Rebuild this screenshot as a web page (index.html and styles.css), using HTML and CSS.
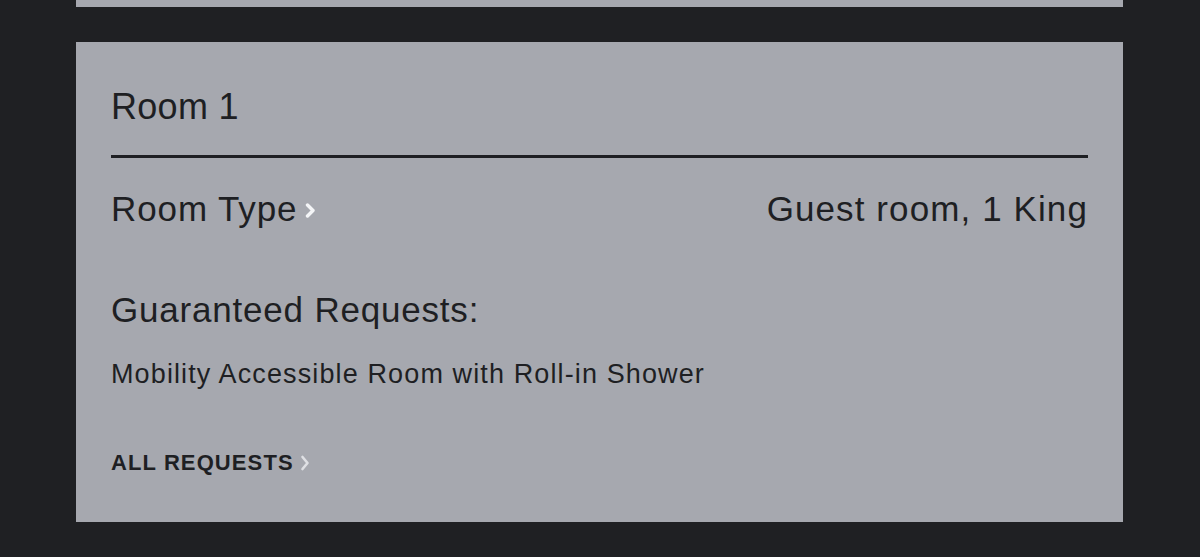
FILE: index.html
```html
<!DOCTYPE html>
<html>
<head>
	<meta charset="utf-8">
	<meta name="viewport" content="width=device-width, initial-scale=1">
	<title>Reservation</title>

	<link rel="stylesheet" href="styles.css">
</head>
<body>

	<div class="card card-prev"></div>

	<section class="card room">
		<h2 class="room-title">Room 1</h2>
		<div class="divider"></div>

		<div class="row">
			<a class="row-label" href="#">Room Type<svg class="chevron" viewBox="0 0 11 15" width="11" height="15"><polyline points="2.5,2 8,7.5 2.5,13" /></svg></a>
			<div class="row-value">Guest room, 1 King</div>
		</div>

		<h3 class="requests-title">Guaranteed Requests:</h3>
		<p class="request">Mobility Accessible Room with Roll-in Shower</p>

		<a class="all-requests" href="#">ALL REQUESTS<svg class="chevron small" viewBox="0 0 10 16" width="10" height="16"><polyline points="2.5,2 7.5,8 2.5,14" /></svg></a>
	</section>

</body>
</html>
```

FILE: styles.css
```css
* {
	margin: 0;
	padding: 0;
	box-sizing: border-box;
}

body {
	background-color: #1f2023;
	font-family: "Liberation Sans", Arial, sans-serif;
	color: #1e1f23;
}

.card {
	width: 1047px;
	margin-left: 76px;
	background-color: #a6a8af;
}

.card-prev {
	height: 7px;
}

.room {
	margin-top: 35px;
	height: 480px;
	padding: 44px 35px 0;
}

.room-title {
	font-size: 36px;
	font-weight: normal;
	line-height: 42px;
	letter-spacing: .3px;
}

.divider {
	margin-top: 27px;
	height: 3px;
	background-color: #1e1f23;
}

.row {
	margin-top: 30px;
	display: flex;
	justify-content: space-between;
	align-items: center;
	font-size: 35px;
	line-height: 42px;
}

.row-label {
	color: inherit;
	text-decoration: none;
	letter-spacing: .9px;
	display: flex;
	align-items: center;
}

.row-value {
	letter-spacing: 1.1px;
}

.chevron {
	margin-left: 8px;
	margin-top: 2px;
}

.chevron polyline {
	fill: none;
	stroke: #f4f5f7;
	stroke-width: 3.4;
	stroke-linecap: round;
	stroke-linejoin: round;
}

.chevron.small {
	margin-left: 6px;
	margin-top: 0;
}

.chevron.small polyline {
	stroke: #dfe0e4;
	stroke-width: 2.6;
}

.requests-title {
	margin-top: 59px;
	font-size: 35px;
	font-weight: normal;
	line-height: 42px;
	letter-spacing: .8px;
}

.request {
	margin-top: 27px;
	font-size: 27px;
	line-height: 32px;
	letter-spacing: 1.12px;
}

.all-requests {
	margin-top: 59px;
	display: flex;
	align-items: center;
	color: #1e1f23;
	text-decoration: none;
	font-size: 22px;
	font-weight: bold;
	line-height: 28px;
	letter-spacing: 1.1px;
}
```
